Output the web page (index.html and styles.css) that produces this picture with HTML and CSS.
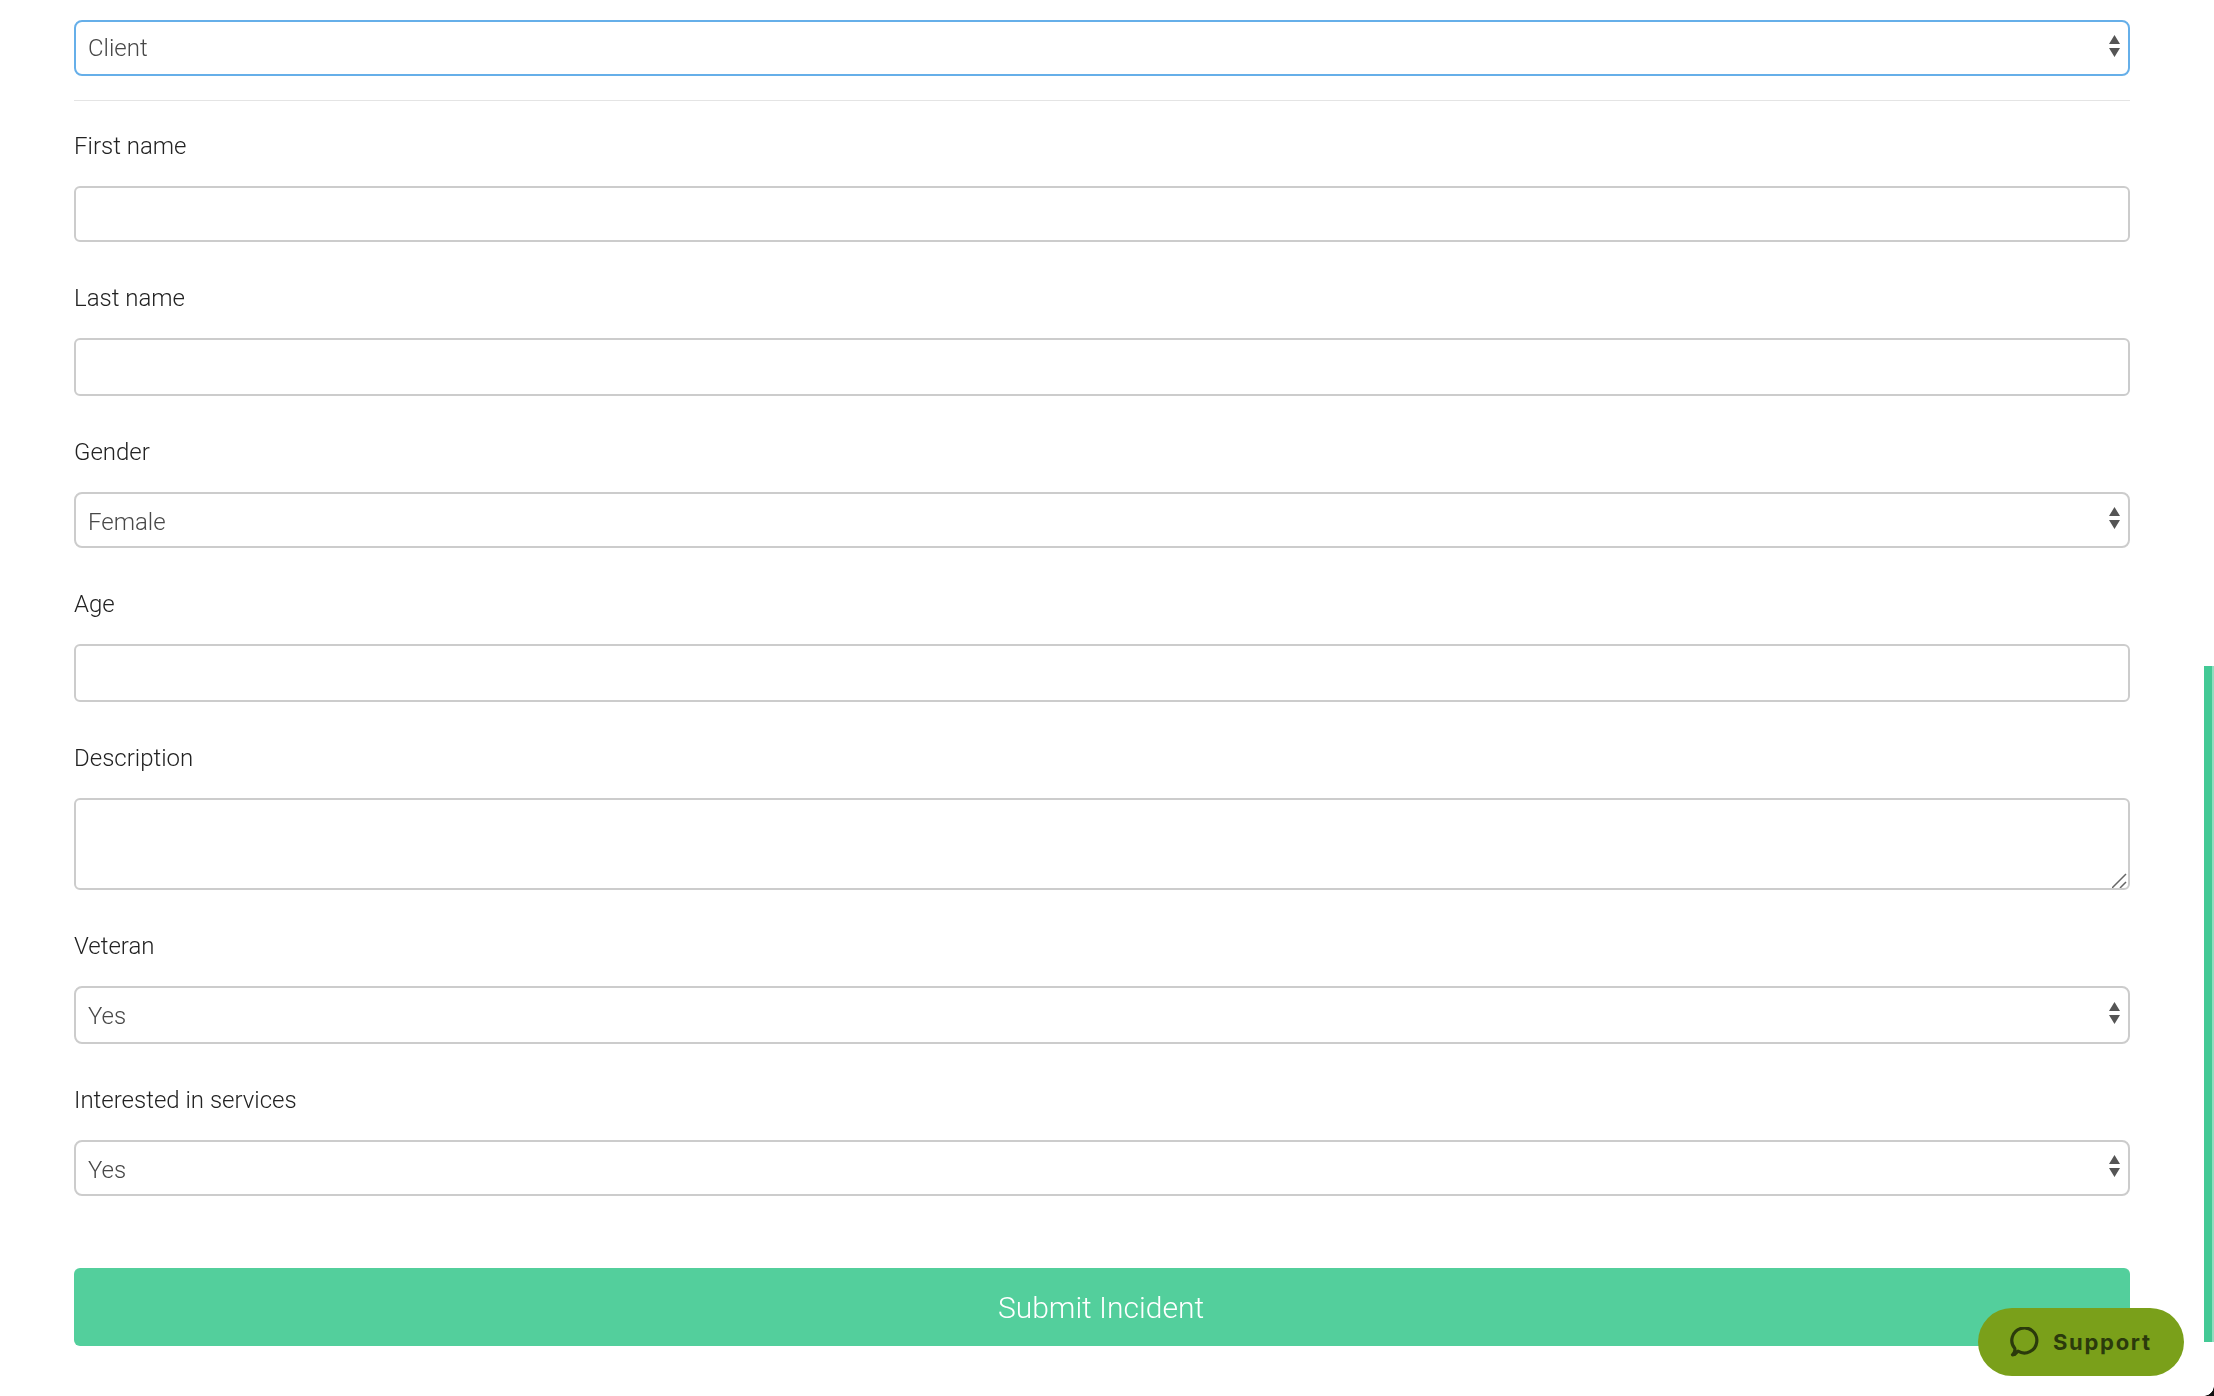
FILE: index.html
```html
<!DOCTYPE html>
<html lang="en">
<head>
<meta charset="utf-8">
<title>Submit Incident</title>
<link rel="stylesheet" href="styles.css">
</head>
<body>
<form class="form">
  <div class="select-box focused">
    <span>Client</span>
    <svg class="updown" viewBox="0 0 11 22"><path d="M5.500 0 11 9H0zM0 13h11l-5.500 9z"/></svg>
  </div>
  <hr class="rule">
  <div class="group g-first">
    <label>First name</label>
    <div class="field"></div>
  </div>
  <div class="group">
    <label>Last name</label>
    <div class="field tall"></div>
  </div>
  <div class="group">
    <label>Gender</label>
    <div class="select-box low2">
      <span>Female</span>
      <svg class="updown" viewBox="0 0 11 22"><path d="M5.500 0 11 9H0zM0 13h11l-5.500 9z"/></svg>
    </div>
  </div>
  <div class="group">
    <label>Age</label>
    <div class="field tall"></div>
  </div>
  <div class="group">
    <label>Description</label>
    <div class="field area">
      <svg class="grip" viewBox="0 0 16 16"><path d="M0 16 14 2M8 16l6-6" fill="none" stroke="#666" stroke-width="1.500"/></svg>
    </div>
  </div>
  <div class="group">
    <label>Veteran</label>
    <div class="select-box tall low1">
      <span>Yes</span>
      <svg class="updown" viewBox="0 0 11 22"><path d="M5.500 0 11 9H0zM0 13h11l-5.500 9z"/></svg>
    </div>
  </div>
  <div class="group">
    <label>Interested in services</label>
    <div class="select-box low2">
      <span>Yes</span>
      <svg class="updown" viewBox="0 0 11 22"><path d="M5.500 0 11 9H0zM0 13h11l-5.500 9z"/></svg>
    </div>
  </div>
  <button class="submit" type="button">Submit Incident</button>
</form>
<div class="scrollbar"></div>
<button class="support" type="button">
  <svg class="bubble" viewBox="0 0 30 30"><path d="M4.500 27.500 8 24.200A12.500 12.500 0 1 0 4.800 21.500Q5.500 24.500 2.500 27.800Z" fill="none" stroke="#2b3a0c" stroke-width="3.200" stroke-linejoin="round" stroke-linecap="round"/></svg>
  <span>Support</span>
</button>
<div class="corner"></div>
</body>
</html>
```
FILE: styles.css
```css
html, body {
  margin: 0;
  padding: 0;
  height: 1396px;
  overflow: hidden;
  background: #fff;
  font-family: Roboto, "Liberation Sans", sans-serif;
  font-weight: 300;
  color: #222;
}
.form {
  display: flex;
  flex-direction: column;
  padding: 20px 84px 0 74px;
  will-change: transform;
}
.select-box {
  box-sizing: border-box;
  height: 56px;
  display: flex;
  align-items: center;
  justify-content: space-between;
  padding: 0 8px 0 12px;
  border: 2px solid #ccc;
  border-radius: 8px;
  color: #484848;
  font-size: 24px;
}
.select-box.focused {
  border-color: #66afe9;
}
.select-box.tall,
.field.tall {
  height: 58px;
}
.select-box.low1 span {
  padding-top: 2px;
}
.select-box.low2 span {
  padding-top: 4px;
}
.updown {
  width: 11px;
  height: 22px;
  margin-bottom: 4px;
  fill: #555;
}
.rule {
  width: 100%;
  height: 1px;
  margin: 24px 0 0;
  border: 0;
  background: #e4e4e4;
}
.group {
  margin-top: 40px;
  display: flex;
  flex-direction: column;
}
.group.g-first {
  margin-top: 29px;
}
.group label {
  height: 32px;
  line-height: 32px;
  margin-bottom: 24px;
  font-size: 24px;
  font-weight: 300;
}
.field {
  box-sizing: border-box;
  position: relative;
  height: 56px;
  border: 2px solid #ccc;
  border-radius: 6px;
}
.field.area {
  height: 92px;
}
.grip {
  position: absolute;
  right: 0;
  bottom: 0;
  width: 16px;
  height: 16px;
}
.submit {
  margin-top: 72px;
  height: 78px;
  padding: 0 2px 0 0;
  border: 0;
  border-radius: 6px;
  background: #53cf9c;
  color: #fff;
  font-family: inherit;
  font-size: 30px;
  font-weight: 300;
}
.scrollbar {
  position: absolute;
  left: 2204px;
  top: 666px;
  width: 8px;
  height: 676px;
  background: #43c995;
  border-right: 2px solid #8fdfc0;
}
.support {
  position: absolute;
  left: 1978px;
  top: 1308px;
  width: 206px;
  height: 68px;
  display: flex;
  align-items: center;
  gap: 13px;
  padding: 0 0 0 32px;
  border: 0;
  border-radius: 34px;
  background: #7aa01a;
  color: #2b3a0c;
  font-family: Inter, sans-serif;
  font-size: 22px;
  font-weight: 700;
  letter-spacing: 1.700px;
}
.bubble {
  width: 30px;
  height: 30px;
}
.corner {
  position: absolute;
  right: 0;
  bottom: 0;
  width: 10px;
  height: 10px;
  background: radial-gradient(circle at 0 0, transparent 9.500px, #111 10px);
}
```
